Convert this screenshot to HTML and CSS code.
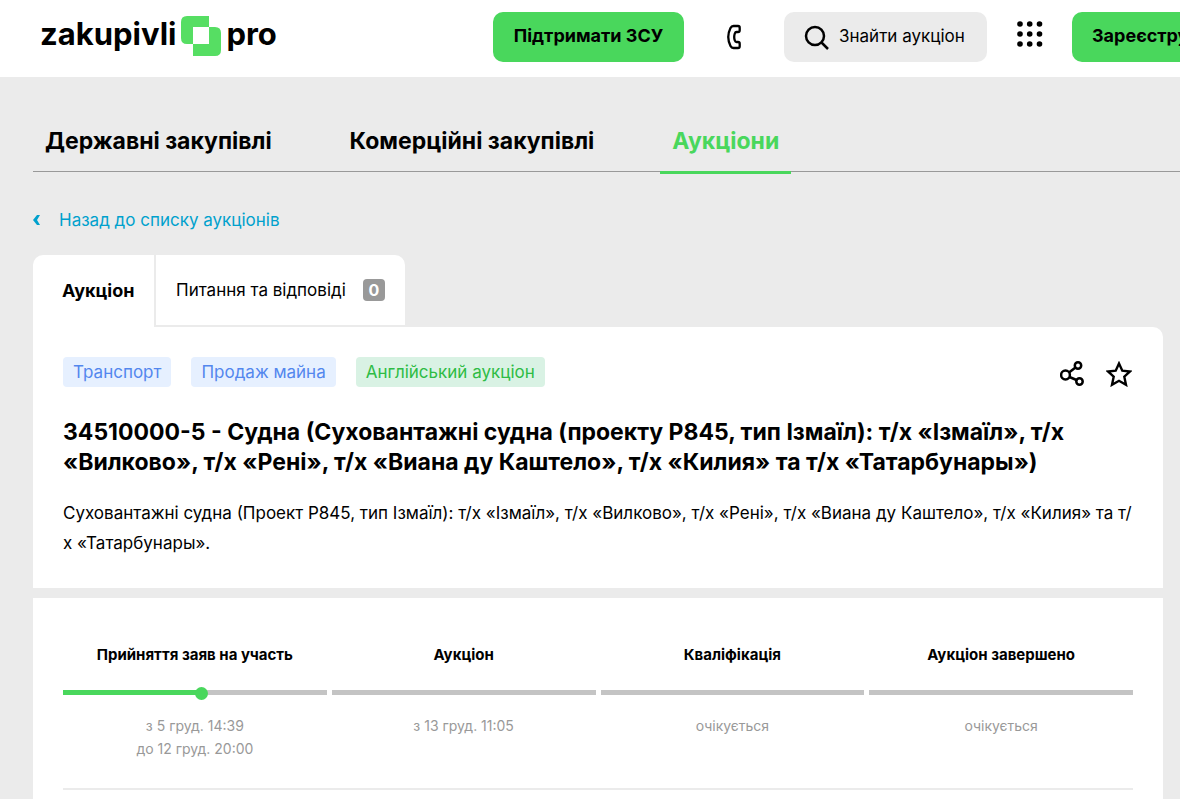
FILE: index.html
```html
<!DOCTYPE html>
<html lang="uk">
<head>
<meta charset="utf-8">
<title>Аукціон - zakupivli pro</title>
<link rel="stylesheet" href="styles.css">
</head>
<body>
<header class="header">
  <a class="logo" href="#">
    <span>zakupivli</span>
    <svg class="logo-mark" width="40" height="40" viewBox="0 0 40 40" aria-hidden="true"><path fill="#56de63" d="M6 0H28V11H34Q40 11 40 17V34Q40 40 34 40H12V28H6Q0 28 0 22V6Q0 0 6 0Z"/><path fill="#fff" d="M12 11H28V28H12Z"/></svg>
    <span>pro</span>
  </a>
  <div class="actions">
    <button class="btn" type="button">Підтримати ЗСУ</button>
    <button class="icon-btn phone" type="button" aria-label="Телефон">
      <svg width="14" height="26" viewBox="0 0 14 26" fill="none" stroke="#000" stroke-width="2.300" stroke-linejoin="round"><path d="M6.500 2H11Q12.700 2 12.700 3.700V6.300Q12.700 8 11 8H9.500Q8.300 8 7.800 9.500Q6.600 13 7.800 16.500Q8.300 18 9.500 18H11Q12.700 18 12.700 19.700V22.300Q12.700 24 11 24H6.500Q4.500 24 3.500 22Q-1 13 3.500 4Q4.500 2 6.500 2Z"/></svg>
    </button>
    <button class="search" type="button">
      <svg width="26" height="26" viewBox="0 0 26 26" fill="none" stroke="#000" stroke-width="2.500"><circle cx="11" cy="12" r="9"/><path d="M17.500 18.500L24 25"/></svg>
      <span>Знайти аукціон</span>
    </button>
    <button class="icon-btn" type="button" aria-label="Меню">
      <svg width="26" height="26" viewBox="0 0 26 26"><circle cx="3" cy="3" r="2.800"/><circle cx="12.700" cy="3" r="2.800"/><circle cx="22.500" cy="3" r="2.800"/><circle cx="3" cy="13" r="2.800"/><circle cx="12.700" cy="13" r="2.800"/><circle cx="22.500" cy="13" r="2.800"/><circle cx="3" cy="23" r="2.800"/><circle cx="12.700" cy="23" r="2.800"/><circle cx="22.500" cy="23" r="2.800"/></svg>
    </button>
    <button class="btn" type="button">Зареєструватися</button>
  </div>
</header>
<nav class="sections">
  <a href="#">Державні закупівлі</a>
  <a href="#">Комерційні закупівлі</a>
  <a class="current" href="#">Аукціони</a>
</nav>
<main class="main">
  <a class="back" href="#">
    <svg width="8" height="10" viewBox="0 0 8 10"><path fill="#00a1cd" d="M4 0H7L4 5L7 10H4L0 5Z"/></svg>
    <span>Назад до списку аукціонів</span>
  </a>
  <div class="tabs">
    <a class="tab tab-active" href="#">Аукціон</a>
    <a class="tab tab-other" href="#">Питання та відповіді <span class="count">0</span></a>
  </div>
  <section class="card">
    <div class="card-top">
      <div class="tags">
        <span class="tag">Транспорт</span>
        <span class="tag">Продаж майна</span>
        <span class="tag tag-green">Англійський аукціон</span>
      </div>
      <div class="tools">
        <button class="icon-btn" type="button" aria-label="Поділитися">
          <svg width="24" height="26" viewBox="0 0 24 26" fill="none" stroke="#000" stroke-width="2.500"><circle cx="5.500" cy="14" r="4.400"/><circle cx="18" cy="4.500" r="3.200"/><circle cx="19.500" cy="20.500" r="3.200"/><path d="M9 11.500L15.500 6.500M9.500 16L16.500 19"/></svg>
        </button>
        <button class="icon-btn" type="button" aria-label="До обраного">
          <svg width="26" height="26" viewBox="0 0 26 26" fill="none" stroke="#000" stroke-width="2.400"><path d="M13 2.500L16.300 9.700L24 10.500L18.300 15.700L20 23.800L13 19.800L6 23.800L7.700 15.700L2 10.500L9.700 9.700Z"/></svg>
        </button>
      </div>
    </div>
    <h1 class="title">34510000-5 - Судна (Суховантажні судна (проекту Р845, тип Ізмаїл): т/х «Ізмаїл», т/х «Вилково», т/х «Рені», т/х «Виана ду Каштело», т/х «Килия» та т/х «Татарбунары»)</h1>
    <p class="text">Суховантажні судна (Проект Р845, тип Ізмаїл): т/х «Ізмаїл», т/х «Вилково», т/х «Рені», т/х «Виана ду Каштело», т/х «Килия» та т/<wbr>х «Татарбунары».</p>
  </section>
  <section class="stages-card">
    <ol class="stages">
      <li class="stage"><h2>Прийняття заяв на участь</h2><div class="bar"><div class="fill" style="width:52.5%"></div></div><p>з 5 груд. 14:39<br>до 12 груд. 20:00</p></li>
      <li class="stage"><h2>Аукціон</h2><div class="bar"></div><p>з 13 груд. 11:05</p></li>
      <li class="stage"><h2>Кваліфікація</h2><div class="bar"></div><p>очікується</p></li>
      <li class="stage"><h2>Аукціон завершено</h2><div class="bar"></div><p>очікується</p></li>
    </ol>
  </section>
</main>
</body>
</html>
```

FILE: styles.css
```css
* { box-sizing: border-box; }
body { margin: 0; background: #ebebeb; color: #000; font: 17px/30px Inter, "Liberation Sans", sans-serif; overflow: hidden; }
a { color: inherit; text-decoration: none; }
button { font: inherit; color: inherit; border: 0; padding: 0; background: none; white-space: nowrap; flex: none; }
svg { display: block; flex: none; }
h1, h2, p, ol { margin: 0; padding: 0; }
.header { display: flex; align-items: flex-start; justify-content: space-between; background: #fff; height: 77px; padding: 12px 0 0 40px; overflow: hidden; }
.logo { display: flex; gap: 5px; align-items: center; height: 44px; font-size: 31px; font-weight: 700; line-height: 44px; }
.logo-mark { margin-top: 3px; }
.actions { display: flex; align-items: center; height: 50px; width: 687px; flex: none; }
.btn { min-width: 191px; height: 50px; border-radius: 10px; background: #49d75c; font-size: 18px; font-weight: 700; padding: 0 20px 2px; }
.phone { margin: 0 43px; }
.search { display: flex; align-items: center; gap: 9px; height: 50px; width: 203px; padding: 0 20px; border-radius: 10px; background: #ebebeb; margin-right: 30px; }
.search span { padding-bottom: 3px; }
.search + .icon-btn { margin: 0 29px 7px 0; }
.sections { display: flex; gap: 54px; margin: 48px 0 0 33px; height: 47px; border-bottom: 1px solid #999; font-size: 23px; font-weight: 700; white-space: nowrap; }
.sections a { padding: 0 12px; height: 49px; line-height: 32px; flex: none; }
.sections .current { color: #49d75c; border-bottom: 3px solid #49d75c; }
.main { padding: 33px 17px 0 33px; }
.back { display: flex; align-items: center; gap: 18px; color: #00a1cd; }
.tabs { display: flex; height: 72px; margin-top: 20px; }
.tab { display: flex; align-items: center; background: #fff; }
.tab-active { width: 121px; padding-left: 29px; font-size: 18px; font-weight: 700; border-radius: 10px 0 0 0; }
.tab-other { width: 251px; justify-content: space-between; padding: 0 20px; border-left: 2px solid #ebebeb; border-bottom: 2px solid #ebebeb; border-radius: 0 10px 0 0; }
.count { width: 22px; height: 22px; border-radius: 4px; background: #999; color: #fff; font-size: 16px; font-weight: 700; line-height: 22px; text-align: center; }
.card { background: #fff; border-radius: 0 10px 0 0; padding: 30px; }
.card-top { display: flex; justify-content: space-between; }
.tags { display: flex; gap: 20px; }
.tag { height: 30px; border-radius: 4px; padding: 0 10px; background: #e6f0ff; color: #5387ee; }
.tag-green { background: #d9f2e4; color: #2ebc45; }
.tools { display: flex; gap: 22px; padding: 3px 1px 0 0; }
.title { margin-top: 30px; font-size: 23px; line-height: 30px; font-weight: 700; }
.text { margin-top: 21px; }
.stages-card { margin-top: 10px; background: #fff; padding: 45px 30px 40px; }
.stages { display: grid; grid-template-columns: repeat(4, 1fr); gap: 5px; list-style: none; text-align: center; padding-bottom: 28px; border-bottom: 2px solid #ebebeb; }
.stage h2 { font-size: 15px; line-height: 24px; font-weight: 700; }
.stage p { margin-top: 19px; font-size: 14px; line-height: 23px; color: #999; }
.bar { height: 5px; margin-top: 23px; background: #c4c4c4; }
.fill { position: relative; height: 5px; background: #49d75c; }
.fill::after { content: ""; position: absolute; right: -7px; top: -3px; width: 13px; height: 13px; border-radius: 50%; background: #49d75c; }
```
